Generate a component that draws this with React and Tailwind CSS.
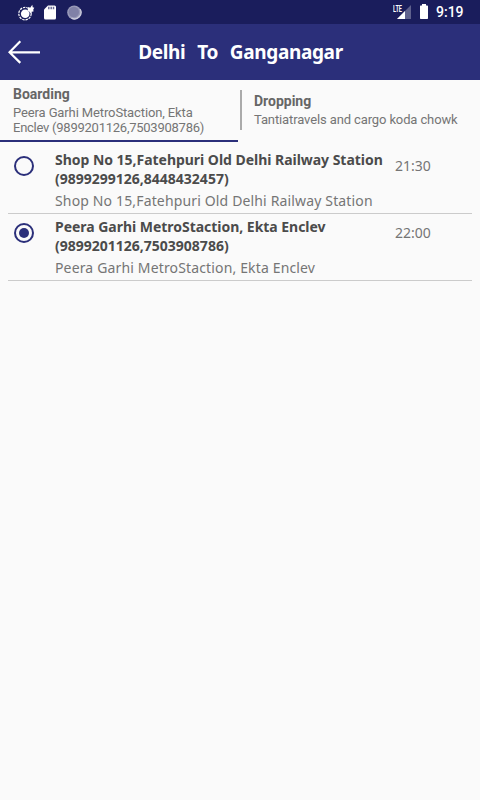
import React, { useState } from 'react';

const stops = [
  {
    id: 1,
    name: 'Shop No 15,Fatehpuri Old Delhi Railway Station',
    phones: '(9899299126,8448432457)',
    address: 'Shop No 15,Fatehpuri Old Delhi Railway Station',
    time: '21:30',
  },
  {
    id: 2,
    name: 'Peera Garhi MetroStaction, Ekta Enclev',
    phones: '(9899201126,7503908786)',
    address: 'Peera Garhi MetroStaction, Ekta Enclev',
    time: '22:00',
  },
];

const StatusBar = () => (
  <div className="flex h-6 items-center bg-[#1a1d5c] text-white">
    <svg className="ml-[18px]" width="17" height="17" viewBox="0 0 17 17" fill="none">
      <circle cx="7" cy="9.6" r="6.2" stroke="white" strokeWidth="1.2" strokeDasharray="2.4 .9" />
      <circle cx="7.2" cy="9.8" r="4.3" fill="white" />
      <path d="M10.2 3l2 .8L14.3.8l.4 2.4 1.6.6-1 1.6.2 2.2-1.8.2-1.5 1.4-1-1.6-1.6-.8z" fill="white" />
    </svg>
    <svg className="ml-[9px]" width="12" height="15" viewBox="0 0 12 15">
      <path d="M4 .5h6.5A1.5 1.5 0 0 1 12 2v11a1.5 1.5 0 0 1-1.5 1.5h-9A1.5 1.5 0 0 1 0 13V4.5z" fill="white" />
      <path d="M4.8 1.8v2.4M7.2 1.8v2.4M9.5 1.8v2.4" stroke="#1a1d5c" strokeOpacity=".65" strokeWidth="1.5" />
    </svg>
    <svg className="ml-[11px]" width="15" height="15" viewBox="0 0 15 15">
      <circle cx="7.2" cy="7.5" r="7" fill="#9a9bb9" />
      <path d="M13 4a6.500 6.500 0 0 1-8.500 9.200" fill="none" stroke="#c9cadb" strokeWidth="1.4" />
      <circle cx="6.8" cy="7" r="5.2" fill="#8081a7" />
    </svg>
    <div className="flex-1" />
    <svg width="18" height="16" viewBox="0 0 18 16">
      <path d="M18 1v14H4z" fill="white" fillOpacity=".3" />
      <path d="M12 7v8H4z" fill="white" />
      <text
        x="0"
        y="7.5"
        textLength="9"
        lengthAdjust="spacingAndGlyphs"
        fill="white"
        className="font-['Roboto'] text-[9px] font-bold"
      >
        LTE
      </text>
    </svg>
    <svg className="ml-[9px]" width="8" height="16" viewBox="0 0 8 16">
      <path d="M2 0h4v1.5h1.3q.7 0 .7.7v12.1q0 .7-.7.7H.7q-.7 0-.7-.7V2.2q0-.7.7-.7H2z" fill="white" />
    </svg>
    <span className="ml-2 mr-4 w-7 whitespace-nowrap font-['Roboto',sans-serif] text-sm font-medium">9:19</span>
  </div>
);

const Header = () => (
  <header className="flex h-14 items-center bg-[#2b2f7a] text-white">
    <button className="ml-2 w-8" aria-label="Back">
      <svg width="32" height="24" viewBox="0 0 32 24" fill="none" stroke="white" strokeWidth="2.2">
        <path d="M32 12.3H1.5M12.3 1.2L1.5 12.3l10.8 10.6" />
      </svg>
    </button>
    <h1 className="flex-1 whitespace-pre pr-[39px] text-center text-[19px] font-bold tracking-[-0.35px] [word-spacing:1.3px]">
      {'Delhi  To  Ganganagar'}
    </h1>
  </header>
);

const Radio = ({ checked, onClick }) => (
  <button
    role="radio"
    aria-checked={checked}
    onClick={onClick}
    className="mt-1.5 flex size-5 shrink-0 items-center justify-center rounded-full border-2 border-[#2b2f7a]"
  >
    {checked && <span className="size-2.5 rounded-full bg-[#2b2f7a]" />}
  </button>
);

const StopRow = ({ stop, checked, onSelect }) => (
  <div className="mx-2 flex h-[67px] items-start border-b border-[#cbcbcb] pl-1.5 pt-[3px]">
    <Radio checked={checked} onClick={onSelect} />
    <div className="ml-[21px] w-[340px] whitespace-nowrap text-sm">
      <p className="font-bold leading-[19px] text-[#4b4b4b]">
        <span className="tracking-[-0.03px]">{stop.name}</span>
        <br />
        {stop.phones}
      </p>
      <p className="mt-[3px] leading-[19px] tracking-[0.15px] text-[#757575]">{stop.address}</p>
    </div>
    <span className="mt-1.5 text-sm leading-[19px] text-[#757575]">{stop.time}</span>
  </div>
);

const App = () => {
  const [selected, setSelected] = useState(2);

  return (
    <div className="min-h-screen w-full bg-[#fafafa] font-['Noto_Sans',sans-serif]">
      <StatusBar />
      <Header />

      {/* Boarding / Dropping tabs */}
      <div className="flex h-[62px] font-['Roboto',sans-serif] text-[13px] leading-[15px] tracking-[-0.12px] text-[#757575]">
        <div className="w-[238px] border-b-2 border-[#2b2f7a] pl-[13px] pt-1.5">
          <p className="text-sm font-bold leading-4 tracking-normal text-[#666]">Boarding</p>
          <p className="mt-[3px] whitespace-nowrap">
            Peera Garhi MetroStaction, Ekta
            <br />
            <span className="tracking-[-0.25px]">Enclev (9899201126,7503908786)</span>
          </p>
        </div>
        <div className="ml-0.5 mt-2.5 h-10 w-0.5 bg-[#aaa]" />
        <div className="ml-3 pt-[13px]">
          <p className="text-sm font-bold leading-4 tracking-normal text-[#666]">Dropping</p>
          <p className="mt-[3px] whitespace-nowrap">Tantiatravels and cargo koda chowk</p>
        </div>
      </div>

      {/* Boarding points */}
      <div className="pt-[5px]">
        {stops.map((stop) => (
          <StopRow
            key={stop.id}
            stop={stop}
            checked={selected === stop.id}
            onSelect={() => setSelected(stop.id)}
          />
        ))}
      </div>
    </div>
  );
};

export default App;
